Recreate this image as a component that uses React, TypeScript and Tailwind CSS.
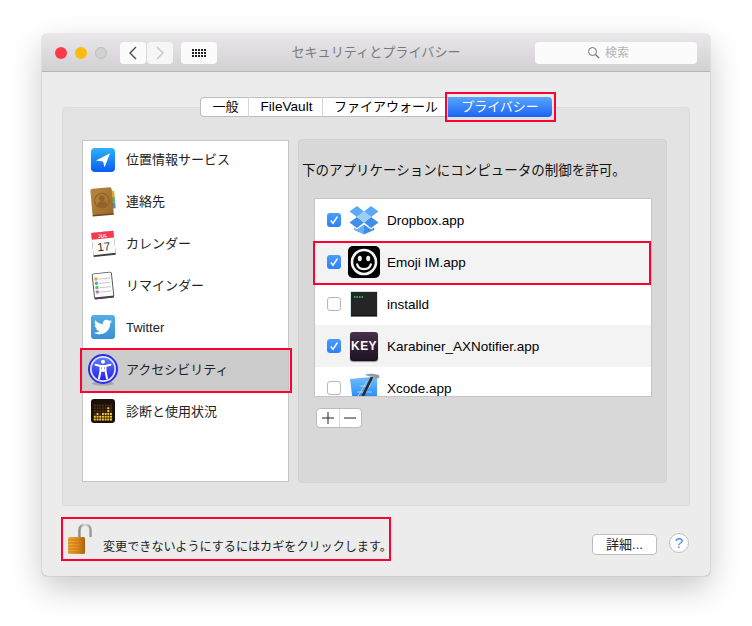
import { FaTwitter } from "react-icons/fa";

const fontStack = "font-['Liberation_Sans','Noto_Sans_CJK_JP',sans-serif]";

const LocationIcon = () => (
  <svg viewBox="0 0 24 24" className="h-6 w-6">
    <defs>
      <linearGradient id="loc" x1="0" y1="0" x2="0" y2="1">
        <stop offset="0" stopColor="#2db2f9" />
        <stop offset="1" stopColor="#0a5cf0" />
      </linearGradient>
    </defs>
    <rect width="24" height="24" rx="4" fill="url(#loc)" />
    <path d="M5 12.6 19 5.2 13.6 19.2 12 13.6Z" fill="#fff" />
  </svg>
);

const ContactsIcon = () => (
  <svg viewBox="0 0 28 32" className="h-[31px] w-[28px]">
    <defs>
      <linearGradient id="book" x1="0" y1="0" x2="1" y2="1">
        <stop offset="0" stopColor="#b98640" />
        <stop offset="1" stopColor="#9a6a2c" />
      </linearGradient>
    </defs>
    <g transform="rotate(-5 14 16)">
      <rect x="23" y="6" width="3.5" height="6" fill="#e8a33a" />
      <rect x="23" y="12" width="3.5" height="6" fill="#5bb85a" />
      <rect x="23" y="18" width="3.5" height="6" fill="#4a8fd8" />
      <rect x="2" y="2" width="22" height="28" rx="2" fill="url(#book)" />
      <rect x="2" y="29" width="22" height="1.5" fill="#6b4a20" />
      <circle cx="13" cy="15" r="7.5" fill="none" stroke="#8a5d26" strokeWidth="1" />
      <circle cx="13" cy="12.8" r="2.8" fill="#8f6229" />
      <path d="M7.5 20c.8-3.4 3-4.4 5.500-4.400s4.700 1 5.500 4.400c-3 2-8 2-11 0Z" fill="#8f6229" />
    </g>
  </svg>
);

const CalendarIcon = () => (
  <svg viewBox="0 0 28 30" className="h-[29px] w-[28px]">
    <g transform="rotate(-6 14 15)">
      <rect x="3" y="3" width="23" height="25" fill="#3d3d3d" />
      <rect x="3" y="3" width="23" height="23" fill="#fbfbfb" />
      <rect x="3" y="3" width="23" height="7" fill="#f43c4e" />
      <text x="14.500" y="8.800" textAnchor="middle" fontSize="5" fontWeight="700" fill="#fff" fontFamily="Liberation Sans">
        JUL
      </text>
      <text x="14.500" y="22.500" textAnchor="middle" fontSize="12" fill="#333" fontFamily="Liberation Sans">
        17
      </text>
    </g>
  </svg>
);

const RemindersIcon = () => (
  <svg viewBox="0 0 26 30" className="h-[29px] w-[26px]">
    <g transform="rotate(-6 13 15)">
      <rect x="3" y="2" width="20" height="26" rx="1.500" fill="#fdfdfd" stroke="#555" strokeWidth="1" />
      <rect x="3" y="26.500" width="20" height="2" fill="#444" />
      <path d="M9 8h12M9 12.500h12M9 17h12M9 21.500h12" stroke="#bdbdbd" strokeWidth="0.800" />
      <circle cx="6.500" cy="7.500" r="1.800" fill="#f5a623" />
      <circle cx="6.500" cy="12" r="1.800" fill="#3fa9f5" />
      <circle cx="6.500" cy="16.500" r="1.800" fill="#4cd04c" />
      <circle cx="6.500" cy="21" r="1.800" fill="#c86dd7" />
    </g>
  </svg>
);

const AccessibilityIcon = () => (
  <svg viewBox="0 0 30 32" className="h-8 w-[30px] translate-y-px">
    <defs>
      <linearGradient id="acc" x1="0" y1="0" x2="0" y2="1">
        <stop offset="0" stopColor="#5a7cf8" />
        <stop offset="1" stopColor="#2a1fe8" />
      </linearGradient>
    </defs>
    <ellipse cx="15" cy="29.500" rx="11" ry="2" fill="#a5a5a5" />
    <circle cx="15" cy="15" r="15" fill="#2d2df0" />
    <circle cx="15" cy="15" r="13" fill="#dfe6ff" />
    <circle cx="15" cy="15" r="11.300" fill="url(#acc)" />
    <circle cx="15" cy="7.800" r="2" fill="#fff" />
    <path d="M7.500 10.700 12.500 12v5l-1.500 7.500M22.500 10.700 17.500 12v5l1.500 7.500M12.500 12h5M12.500 16.500h5M15 12v5" fill="none" stroke="#fff" strokeWidth="2" strokeLinecap="round" strokeLinejoin="round" />
  </svg>
);

const diagnosticHeights = [2, 3, 2, 3, 3, 5, 3];

const DiagnosticsIcon = () => (
  <svg viewBox="0 0 24 24" className="h-6 w-6">
    <rect width="24" height="24" rx="3" fill="#1c1109" />
    {diagnosticHeights.map((height, col) =>
      [0, 1, 2, 3, 4, 5].map((row) => (
        <rect
          key={`${col}-${row}`}
          x={2.8 + col * 2.7}
          y={19.5 - row * 2.8}
          width="2"
          height="2"
          fill={row < height ? "#fbc92f" : "#4a2d12"}
        />
      ))
    )}
  </svg>
);

const sideRows = [
  { label: "位置情報サービス", icon: <LocationIcon /> },
  { label: "連絡先", icon: <ContactsIcon /> },
  { label: "カレンダー", icon: <CalendarIcon /> },
  { label: "リマインダー", icon: <RemindersIcon /> },
  {
    label: "Twitter",
    icon: (
      <span className="flex h-6 w-6 items-center justify-center rounded-[3px] bg-gradient-to-b from-[#55ace8] to-[#3a90d4] text-white">
        <FaTwitter size={18} />
      </span>
    ),
  },
  { label: "アクセシビリティ", icon: <AccessibilityIcon />, selected: true },
  { label: "診断と使用状況", icon: <DiagnosticsIcon /> },
];

const DropboxIcon = () => (
  <svg viewBox="0 0 32 30" className="h-[30px] w-8">
    <path d="M9 1 16 6.500 9 12 1.500 6.500Z" fill="#5aa9f2" />
    <path d="M23 1 30.500 6.500 23 12 16 6.500Z" fill="#5aa9f2" />
    <path d="M9 12 16 17.500 9 23 1.500 17.500Z" fill="#3f8fe8" />
    <path d="M23 12 30.500 17.500 23 23 16 17.500Z" fill="#3f8fe8" />
    <path d="M16 6.500 23 12 16 17.500 9 12Z" fill="#9ccdf8" />
    <path d="M6 22.500 9 24.500 16 19.500V29.500L6 25Z" fill="#66aef2" />
    <path d="M26 22.500 23 24.500 16 19.500V29.500L26 25Z" fill="#3e8de6" />
  </svg>
);

const EmojiIcon = () => (
  <svg viewBox="0 0 32 32" className="h-8 w-8">
    <rect width="32" height="32" rx="5" fill="#000" />
    <circle cx="16" cy="16" r="12" fill="none" stroke="#f4f4f4" strokeWidth="2.600" />
    <ellipse cx="11.800" cy="12.500" rx="2" ry="2.800" fill="#f4f4f4" />
    <ellipse cx="20.200" cy="12.500" rx="2" ry="2.800" fill="#f4f4f4" />
    <path d="M8.800 17.500c1 4 4 5.700 7.200 5.700s6.200-1.700 7.200-5.700" fill="none" stroke="#f4f4f4" strokeWidth="2.200" />
  </svg>
);

const TerminalIcon = () => (
  <svg viewBox="0 0 30 30" className="h-[30px] w-[30px]">
    <rect x="1" y="2" width="28" height="26" fill="#cfe4ea" />
    <rect x="2" y="3" width="26" height="24" fill="#252525" />
    <rect x="2" y="26" width="26" height="1.500" fill="#101010" />
    <path d="M5 7h1.500v2H5zM7.500 7H9v2H7.500zM10 7h1.500v2H10zM12.500 7H14v2h-1.500z" fill="#1fb45a" />
  </svg>
);

const KeyIcon = () => (
  <span className="flex h-[29px] w-7 items-center justify-center rounded-[3px] bg-gradient-to-b from-[#47304c] to-[#1d1120] text-[12px] font-bold tracking-[0.4px] text-white shadow-[0_1px_1px_rgba(0,0,0,0.4)]">
    KEY
  </span>
);

const XcodeIcon = () => (
  <svg viewBox="0 0 32 30" className="h-[30px] w-8">
    <defs>
      <linearGradient id="xc" x1="0" y1="0" x2="0" y2="1">
        <stop offset="0" stopColor="#6ec0fa" />
        <stop offset="1" stopColor="#1a7cf2" />
      </linearGradient>
    </defs>
    <path d="M2 6 29 3.500V30H5Z" fill="url(#xc)" />
    <path d="M9 25 19 8M14 25 23 10M9 19h15M12 13h11" stroke="#c9e6fd" strokeWidth="0.700" fill="none" />
    <path d="M12 29 24 4" stroke="#2b2b2b" strokeWidth="2.600" />
    <path d="M17 2c3-2 8-1.500 14 0l.5 3-3 .5-2-1c-3-1.500-6-1-9.500-2.500Z" fill="#9a9a9a" />
  </svg>
);

const appRows = [
  { label: "Dropbox.app", icon: <DropboxIcon />, checked: true },
  { label: "Emoji IM.app", icon: <EmojiIcon />, checked: true },
  { label: "installd", icon: <TerminalIcon />, checked: false },
  { label: "Karabiner_AXNotifier.app", icon: <KeyIcon />, checked: true },
  { label: "Xcode.app", icon: <XcodeIcon />, checked: false },
];

const Checkbox = ({ checked }: { checked: boolean }) =>
  checked ? (
    <span className="flex h-[14px] w-[14px] shrink-0 items-center justify-center rounded-[3px] bg-gradient-to-b from-[#4c9bfc] to-[#2f80f8]">
      <svg viewBox="0 0 14 14" className="h-[14px] w-[14px]">
        <path d="M3.800 7.500 6 10.200 10.400 3.600" fill="none" stroke="#fff" strokeWidth="1.500" />
      </svg>
    </span>
  ) : (
    <span className="h-[14px] w-[14px] shrink-0 rounded-[3px] border border-[#b8b8b8] bg-white" />
  );

const Tab = ({ label, className }: { label: string; className: string }) => (
  <div className={`flex items-center justify-center border-r border-[#d6d6d6] pl-[2px] text-black ${className}`}>
    {label}
  </div>
);

const App = () => {
  return (
    <div className={`h-[626px] w-[752px] overflow-hidden bg-white pl-[42px] pt-[34px] ${fontStack}`}>
      <div className="flex h-[542px] w-[668px] flex-col rounded-[5px] bg-[#ececec] shadow-[0_0_1px_rgba(0,0,0,0.5),0_12px_32px_rgba(0,0,0,0.22)]">
        {/* title bar */}
        <div className="grid h-[38px] shrink-0 grid-cols-[1fr_auto_1fr] items-center rounded-t-[5px] border-b border-[#b4b4b4] bg-gradient-to-b from-[#e9e7e9] to-[#d2d0d2] pl-[13px] pr-[13px]">
          <div className="flex items-center">
            <span className="h-3 w-3 rounded-full bg-[#fb3b4c]" />
            <span className="ml-2 h-3 w-3 rounded-full bg-[#fdbb0f]" />
            <span className="ml-2 h-3 w-3 rounded-full border border-[#bcbcbc] bg-[#d2d1d2]" />
            <button className="ml-[13px] flex h-[22px] w-[26px] items-center justify-center rounded-[4px] bg-[#fbfbfb]" type="button">
              <svg viewBox="0 0 10 14" className="h-[14px] w-[10px]">
                <path d="M8 1 2 7l6 6" fill="none" stroke="#4a4a4a" strokeWidth="1.400" />
              </svg>
            </button>
            <button className="ml-px flex h-[22px] w-[26px] items-center justify-center rounded-[4px] bg-[#f6f6f6]" type="button">
              <svg viewBox="0 0 10 14" className="h-[14px] w-[10px]">
                <path d="M2 1l6 6-6 6" fill="none" stroke="#c6c6c6" strokeWidth="1.400" />
              </svg>
            </button>
            <button className="ml-2 flex h-[22px] w-9 items-center justify-center rounded-[4px] bg-[#fbfbfb]" type="button">
              <span className="grid grid-cols-5 gap-px">
                {Array.from({ length: 15 }).map((_, i) => (
                  <span className="h-[2px] w-[2px] bg-[#222]" key={i} />
                ))}
              </span>
            </button>
          </div>
          <div className="text-[13.100px] text-[#7a7a7a]">セキュリティとプライバシー</div>
          <div className="flex justify-end">
            <div className="flex h-[22px] w-[162px] items-center justify-center gap-[5px] rounded-[4px] bg-[#fbfbfb] pr-[16px]">
              <svg viewBox="0 0 13 13" className="h-[13px] w-[13px]">
                <circle cx="5.500" cy="5.500" r="4" fill="none" stroke="#6e6e6e" strokeWidth="1" />
                <path d="M8.500 8.500 12 12" stroke="#6e6e6e" strokeWidth="1.300" />
              </svg>
              <span className="text-[12px] text-[#b4b4b4]">検索</span>
            </div>
          </div>
        </div>

        {/* main panel */}
        <div className="mx-5 mt-[35px] h-[399px] shrink-0 rounded-[4px] border border-[#dcdcdc] bg-[#e3e3e3]">
          <div className="-mt-[11px] flex justify-center">
            <div className="relative flex h-5">
              <Tab label="一般" className="w-[49px] rounded-l-[4px] border-y border-l border-y-[#bdbdbd] border-l-[#bdbdbd] bg-white text-[13px]" />
              <Tab label="FileVault" className="w-[74px] border-y border-y-[#bdbdbd] bg-white text-[13.600px]" />
              <Tab label="ファイアウォール" className="w-[125px] border-y border-y-[#bdbdbd] bg-white text-[13px]" />
              <div className="relative flex w-[104px] items-center justify-center rounded-r-[4px] bg-gradient-to-b from-[#5aa5fb] to-[#1c62f5] text-[13px] text-white">
                プライバシー
                <span className="absolute -bottom-[5px] -left-[3px] -right-[4px] -top-[5px] border-2 border-[#ff0033]" />
              </div>
            </div>
          </div>

          <div className="ml-[19px] mt-[22px] flex items-start gap-[9px]">
            {/* category list */}
            <div className="mt-px h-[342px] w-[207px] border border-[#c6c6c6] bg-white">
              {sideRows.map((row, index) => (
                <div
                  className={`relative flex items-center pb-[4px] pl-[8px] ${index === 0 ? "h-[41px]" : "h-[42px]"} ${row.selected ? "bg-[#cbcbcb]" : ""}`}
                  key={row.label}
                >
                  <span className="flex h-6 w-6 items-center justify-center [&>*]:shrink-0">{row.icon}</span>
                  <span className="ml-[11px] text-[13px] leading-none text-[#222]">{row.label}</span>
                  {row.selected && (
                    <span className="absolute -bottom-px -left-[3px] -right-[4px] -top-[2px] border-2 border-[#ff0033]" />
                  )}
                </div>
              ))}
            </div>

            {/* apps panel */}
            <div className="h-[344px] w-[369px] rounded-[4px] border border-[#d2d2d2] bg-[#d8d8d8] pl-[15px]">
              <div className="-ml-[12px] mt-[21px] h-[19px] text-[13.500px] leading-[19px] text-[#111]">
                下のアプリケーションにコンピュータの制御を許可。
              </div>
              <div className="relative mt-[18px] w-[338px]">
                <div className="h-[199px] overflow-hidden border border-[#c4c4c4] bg-white">
                  {appRows.map((row, index) => (
                    <div className={`flex h-[42px] items-center pl-3 ${index % 2 === 1 ? "bg-[#f3f3f3]" : ""}`} key={row.label}>
                      <Checkbox checked={row.checked} />
                      <span className="ml-[7px] flex h-8 w-8 shrink-0 items-center justify-center">{row.icon}</span>
                      <span className="ml-[7px] pt-[2px] text-[13.500px] text-black">{row.label}</span>
                    </div>
                  ))}
                </div>
                <span className="absolute -left-px top-[43px] h-[44px] w-[338px] border-2 border-[#ff0033]" />
              </div>
              <div className="ml-[2px] mt-[11px] flex h-5 w-[46px] rounded-[4px] border border-[#bcbcbc] bg-white">
                <button className="flex flex-1 items-center justify-center border-r border-[#dadada]" type="button">
                  <svg viewBox="0 0 12 12" className="h-3 w-3">
                    <path d="M6 0v12M0 6h12" stroke="#222" strokeWidth="1" />
                  </svg>
                </button>
                <button className="flex flex-1 items-center justify-center" type="button">
                  <svg viewBox="0 0 12 12" className="h-3 w-3">
                    <path d="M0 6h12" stroke="#222" strokeWidth="1" />
                  </svg>
                </button>
              </div>
            </div>
          </div>
        </div>

        {/* footer */}
        <div className="relative flex flex-1 items-start pl-[25px]">
          <svg viewBox="0 0 26 32" className="mt-[17px] h-8 w-[26px] shrink-0">
            <defs>
              <linearGradient id="lockBody" x1="0" y1="0" x2="1" y2="0">
                <stop offset="0" stopColor="#f3ad35" />
                <stop offset="0.600" stopColor="#dd8a1c" />
                <stop offset="1" stopColor="#a85f10" />
              </linearGradient>
              <linearGradient id="shackle" x1="0" y1="0" x2="1" y2="0">
                <stop offset="0" stopColor="#8f8f8f" />
                <stop offset="0.500" stopColor="#dcdcdc" />
                <stop offset="1" stopColor="#9c9c9c" />
              </linearGradient>
            </defs>
            <path d="M12.500 16V7c0-7 11-7 11 0v7" fill="none" stroke="url(#shackle)" strokeWidth="2.600" />
            <rect x="1" y="14" width="17" height="17" rx="1.500" fill="url(#lockBody)" />
            <path d="M1 17h17M1 20h17M1 23h17M1 26h17M1 29h17" stroke="#b5701a" strokeWidth="0.700" />
          </svg>
          <span className="ml-[10px] mt-[32px] text-[12.100px] leading-[18px] text-[#222]">
            変更できないようにするにはカギをクリックします。
          </span>
          <span className="absolute left-[19px] top-[11px] h-[44px] w-[330px] border-2 border-[#ff0033]" />
          <button className="ml-auto mt-[28px] flex h-[21px] w-[65px] items-center justify-center rounded-[4px] border border-[#bdbdbd] bg-white text-[13px] text-[#222]" type="button">
            詳細...
          </button>
          <button className="ml-[12px] mr-[21px] mt-[27px] flex h-5 w-5 items-center justify-center rounded-full border border-[#c0c0c0] bg-white text-[15px] text-[#3a8cf8]" type="button">
            ?
          </button>
        </div>
      </div>
    </div>
  );
};

export default App;
